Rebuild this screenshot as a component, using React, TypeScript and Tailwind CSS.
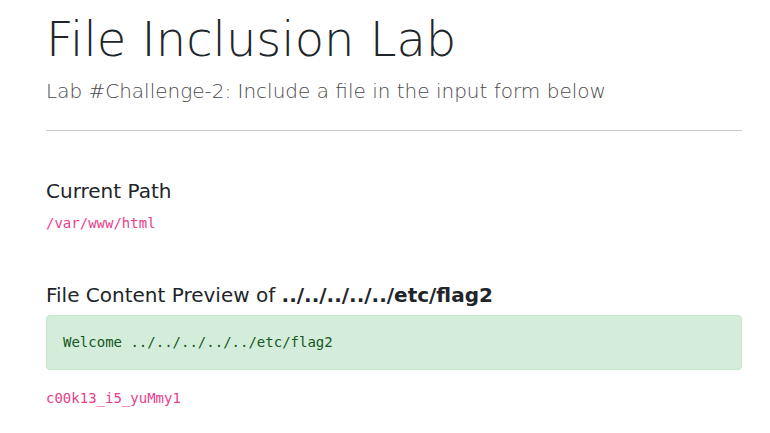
export default function App() {
  return (
    <div className="min-h-screen bg-white font-['DejaVu_Sans',sans-serif] text-[#212529]">
      <div className="ml-[46px] mr-[28px] pt-[11px]">
        <h1 className="text-[48px] font-extralight leading-[1.2] tracking-normal">File Inclusion Lab</h1>
        <p className="mt-[7px] text-[20px] font-light leading-[1.5] text-[#4a4a4a]">
          Lab #Challenge-2: Include a file in the input form below
        </p>
        <hr className="mt-[24px] border-t border-[#cccccc]" />

        <h4 className="mt-[48px] text-[20px] leading-[1.2]">Current Path</h4>
        <code className="mt-[10px] block font-['DejaVu_Sans_Mono',monospace] text-[14px] text-[#e83e8c]">
          /var/www/html
        </code>

        <h4 className="mt-[49px] text-[20px] leading-[1.2]">
          File Content Preview of <b className="font-bold">../../../../../etc/flag2</b>
        </h4>
        <div className="mt-[8px] rounded-[4px] border border-[#c3e6cb] bg-[#d4edda] px-[16px] pt-[16px] pb-[17px] text-[#155724]">
          <pre className="font-['DejaVu_Sans_Mono',monospace] text-[14px] leading-[20px]">Welcome ../../../../../etc/flag2</pre>
        </div>

        <code className="mt-[18px] block font-['DejaVu_Sans_Mono',monospace] text-[14px] text-[#e83e8c]">
          c00k13_i5_yuMmy1
        </code>
      </div>
    </div>
  );
}
